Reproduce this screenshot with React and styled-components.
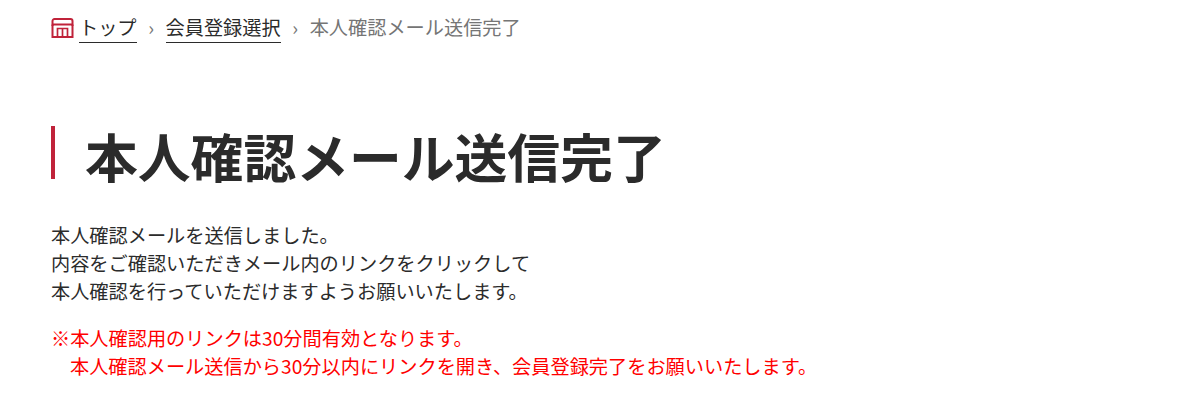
import React from 'react'
import styled, { createGlobalStyle } from 'styled-components'

const Global = createGlobalStyle`
  html, body { margin: 0; padding: 0; background: #fff; }
  body { font-family: "Noto Sans CJK JP", "Noto Sans", sans-serif; color: #2b2b2b; }
`

const Page = styled.main`
  padding: 12px 51px 0;
`

const Crumbs = styled.nav`
  display: flex;
  align-items: flex-start;
  height: 32px;
  font-size: 19.2px;
  line-height: 30px;
`

const HomeIcon = styled.svg`
  width: 23px;
  height: 20px;
  margin: 6px 5px 0 0;
  flex: none;
`

const CrumbLink = styled.a`
  display: block;
  height: 30px;
  color: #2b2b2b;
  border-bottom: 1px solid #2b2b2b;
`

const Sep = styled.span`
  width: 29px;
  text-align: center;
  color: #777;
  font-size: 19.2px;
`

const Current = styled.span`
  color: #757575;
`

const Title = styled.h1`
  margin: 82px 0 0;
  height: 53px;
  padding-left: 30px;
  border-left: 4px solid #c0233a;
  font-size: 52.8px;
  line-height: 64px;
  font-weight: 700;
  color: #2b2b2b;
  display: flex;
  align-items: center;
  padding-top: 5px;
  box-sizing: border-box;
`

const Body = styled.p`
  margin: 42px 0 0;
  font-size: 19.2px;
  line-height: 28px;
  color: #2b2b2b;
`

const Note = styled.ul`
  list-style: none;
  margin: 19px 0 0;
  padding: 0;
  font-size: 19.2px;
  line-height: 28px;
  color: #ff0000;
`

const NoteRow = styled.li`
  padding-left: ${p => (p.$indent ? '19px' : '0')};
`

export default function App() {
  return (
    <Page>
      <Global />
      <Crumbs>
        <HomeIcon viewBox="0 0 23 20" fill="none" stroke="#c0233a" strokeWidth="2">
          <path d="M1.500 8V3a2 2 0 0 1 2-2h16a2 2 0 0 1 2 2v5" />
          <path d="M1 6.500h21" />
          <path d="M1.500 6.500V19h20V6.500" />
          <path d="M6.500 19v-8.500h10V19M11.500 10.500V19" strokeWidth="1.700" />
        </HomeIcon>
        <CrumbLink>トップ</CrumbLink>
        <Sep>›</Sep>
        <CrumbLink>会員登録選択</CrumbLink>
        <Sep>›</Sep>
        <Current>本人確認メール送信完了</Current>
      </Crumbs>
      <Title>本人確認メール送信完了</Title>
      <Body>
        本人確認メールを送信しました。<br />
        内容をご確認いただきメール内のリンクをクリックして<br />
        本人確認を行っていただけますようお願いいたします。
      </Body>
      <Note>
        <NoteRow>※本人確認用のリンクは30分間有効となります。</NoteRow>
        <NoteRow $indent>本人確認メール送信から30分以内にリンクを開き、会員登録完了をお願いいたします。</NoteRow>
      </Note>
    </Page>
  )
}
